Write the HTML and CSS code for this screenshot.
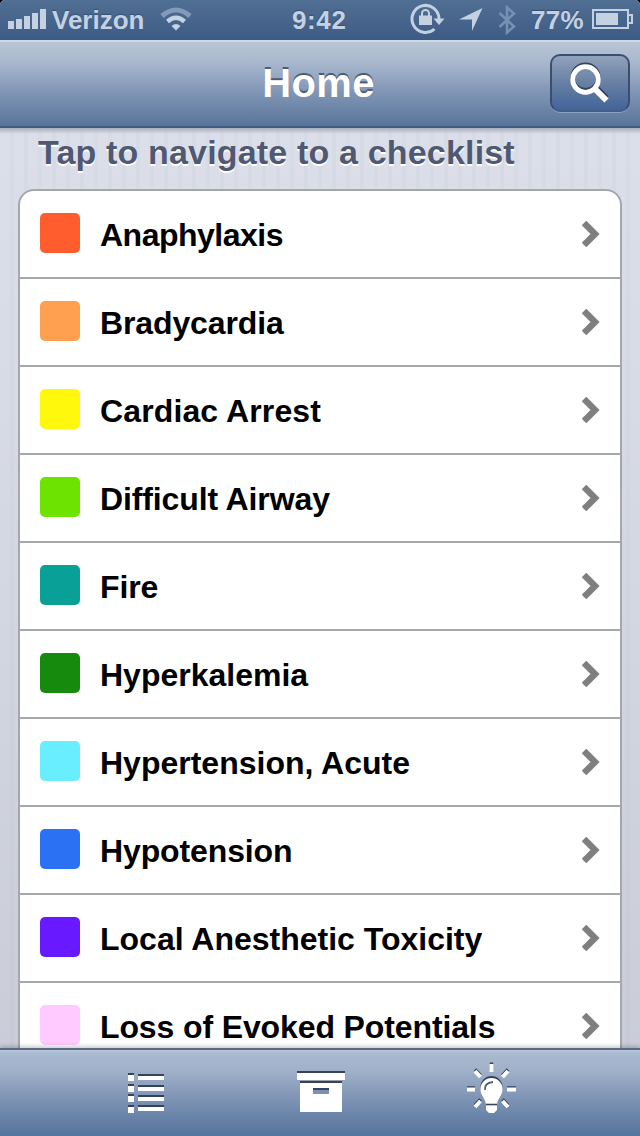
FILE: index.html
```html
<!DOCTYPE html>
<html lang="en">
<head>
<meta charset="utf-8">
<title>Home</title>
<link rel="stylesheet" href="styles.css">
</head>
<body>
<div class="screen">
  <header class="status">
    <svg class="signal" width="39" height="20" viewBox="0 0 39 20"><path d="M0 12h6v8H0zM8 10h6v10H8zM16 7h6v13h-6zM24 4h6v16h-6zM32 0h6v20h-6z" fill="#c3d1e3"/></svg>
    <span class="carrier">Verizon</span>
    <svg class="wifi" width="32" height="24" viewBox="0 0 32 24" fill="none"><path d="M2 9Q16-3 30 9" stroke="#819bb9" stroke-width="5"/><path d="M7.500 14.500Q16 7 24.500 14.500" stroke="#c3d5e5" stroke-width="4.500"/><path d="M11.500 19Q16 15 20.500 19L16 23.500z" fill="#c3d5e5"/></svg>
    <span class="clock">9:42</span>
    <svg class="lock" width="35" height="32" viewBox="0 0 35 32" fill="none" stroke="#c3d1e3"><path d="M24.500 26A13.500 13.500 0 1 1 29 15.500V17" stroke-width="3"/><path d="M23.500 15.500h11L29 22z" fill="#c3d1e3" stroke="none"/><path d="M9 12.500h13v9.500H9z" fill="#c3d1e3" stroke="none"/><path d="M12 13V10.500a3.500 3.500 0 0 1 7 0V13" stroke-width="2"/></svg>
    <svg class="arrow" width="24" height="24" viewBox="0 0 24 24"><path d="M23.500 0L13 23V11.500H0z" fill="#c3d1e3"/></svg>
    <svg class="bluetooth" width="18" height="30" viewBox="0 0 18 30"><path d="M1.500 8L16 21.500 9 27.500V2.500l7 6L1.500 22" fill="none" stroke="#7591b3" stroke-width="2.600"/></svg>
    <span class="percent">77%</span>
    <svg class="battery" width="42" height="20" viewBox="0 0 42 20"><path d="M1 1h35v5h4v8h-4v5H1z" fill="none" stroke="#c3d1e3" stroke-width="2"/><path d="M36 6v8" stroke="#c3d1e3" stroke-width="2"/><path d="M4 4h22v12H4z" fill="#c3d1e3"/></svg>
  </header>
  <nav class="navbar">
    <h1>Home</h1>
    <button class="search" aria-label="Search"><svg width="40" height="42" viewBox="0 0 40 42" fill="none"><g stroke="#35435d"><circle cx="15.500" cy="15.500" r="12.800" stroke-width="4.500"/><path d="M25.500 25L36.500 36" stroke-width="6"/></g><g stroke="#fff"><circle cx="15.500" cy="17.500" r="12.800" stroke-width="4.800"/><path d="M25 27L36.500 38.500" stroke-width="6"/></g></svg></button>
  </nav>
  <main class="content">
    <h2>Tap to navigate to a checklist</h2>
    <ul class="list">
      <li><i class="swatch anaphylaxis"></i><span class="tighter">Anaphylaxis</span><svg class="chevron" viewBox="0 0 18 26"><path d="M2 2L13 13 2 24"/></svg></li>
      <li><i class="swatch bradycardia"></i><span class="tight">Bradycardia</span><svg class="chevron" viewBox="0 0 18 26"><path d="M2 2L13 13 2 24"/></svg></li>
      <li><i class="swatch cardiac"></i><span class="loose">Cardiac Arrest</span><svg class="chevron" viewBox="0 0 18 26"><path d="M2 2L13 13 2 24"/></svg></li>
      <li><i class="swatch airway"></i><span class="tight">Difficult Airway</span><svg class="chevron" viewBox="0 0 18 26"><path d="M2 2L13 13 2 24"/></svg></li>
      <li><i class="swatch fire"></i><span class="tight">Fire</span><svg class="chevron" viewBox="0 0 18 26"><path d="M2 2L13 13 2 24"/></svg></li>
      <li><i class="swatch hyperkalemia"></i><span>Hyperkalemia</span><svg class="chevron" viewBox="0 0 18 26"><path d="M2 2L13 13 2 24"/></svg></li>
      <li><i class="swatch hypertension"></i><span>Hypertension, Acute</span><svg class="chevron" viewBox="0 0 18 26"><path d="M2 2L13 13 2 24"/></svg></li>
      <li><i class="swatch hypotension"></i><span class="tight">Hypotension</span><svg class="chevron" viewBox="0 0 18 26"><path d="M2 2L13 13 2 24"/></svg></li>
      <li><i class="swatch anesthetic"></i><span>Local Anesthetic Toxicity</span><svg class="chevron" viewBox="0 0 18 26"><path d="M2 2L13 13 2 24"/></svg></li>
      <li><i class="swatch potentials"></i><span class="tight">Loss of Evoked Potentials</span><svg class="chevron" viewBox="0 0 18 26"><path d="M2 2L13 13 2 24"/></svg></li>
    </ul>
  </main>
  <footer class="toolbar">
    <svg width="100" height="86" viewBox="0 0 100 86"><path d="M28 23h6v3h-6zM38 24h26v2H38zM28 34h6v3h-6zM38 35h26v2H38zM28 44h6v3h-6zM38 45h26v2H38zM28 55h6v2h-6zM38 55h26v2H38z" fill="#35435d"/><path d="M28 25h6v6h-6zM38 26h26v4H38zM28 36h6v6h-6zM38 37h26v4H38zM28 46h6v6h-6zM38 47h26v4H38zM28 57h6v6h-6zM38 57h26v4H38z" fill="#fff"/></svg>
    <svg width="100" height="86" viewBox="0 0 100 86"><path d="M27 21h48v10H27zM30 30h42v5H30z" fill="#35435d"/><path d="M27 23h48v7.500H27zM30 33h42v29H30z" fill="#fff"/><path d="M43 38h16v6H43z" fill="#7d92b2"/><path d="M43 38h16v2H43z" fill="#35435d"/></svg>
    <svg width="100" height="86" viewBox="0 0 100 86"><g fill="#35435d" stroke="#35435d" transform="translate(0 -1.500)"><path d="M51.500 14v8M35 21l5.500 6M68 21l-5.500 6M27 39.500h8M67 39.500h9M35 57l5.500-6M68 57l-5.500-6" stroke-width="3.500"/><circle cx="51.500" cy="38.500" r="11" stroke="none"/></g><path d="M51.500 14v8M35 21l5.500 6M68 21l-5.500 6M27 39.500h8M67 39.500h9M35 57l5.500-6M68 57l-5.500-6" stroke="#fff" stroke-width="4"/><path d="M40.500 39a11 11 0 0 1 22 0c0 7-5 9-5.500 16H46c-.5-7-5.500-9-5.500-16z" fill="#fff"/><path d="M46 55h11v5l-3 3h-5l-3-3z" fill="#fff"/><path d="M46 54.500h11" stroke="#35435d" stroke-width="1.600"/><path d="M45 40q-1-7 8-8" fill="none" stroke="#4c5b74" stroke-width="1.800"/></svg>
  </footer>
</div>
</body>
</html>
```
FILE: styles.css
```css
* { box-sizing: border-box; }
body { margin: 0; background: #000; font-family: "Liberation Sans", Arial, sans-serif; }
.screen { width: 640px; height: 1136px; display: flex; flex-direction: column; overflow: hidden; border-radius: 5px 5px 0 0; background: #d8dbe6; }

.status { flex: none; height: 40px; display: flex; align-items: flex-start; color: #c3d1e3; font-size: 26px; line-height: 30px; font-weight: bold; background: linear-gradient(#516e93, #3e5b85); text-shadow: 0 -1px 1px #345071; }
.status svg { flex: none; }
.signal { margin: 9px 0 0 8px; }
.carrier { width: 103px; margin: 5px 0 0 5px; }
.wifi { margin: 7px 0 0 5px; }
.clock { width: 60px; margin: 5px 0 0 100px; letter-spacing: .6px; }
.lock { margin: 3px 0 0 58px; }
.arrow { margin: 8px 0 0 14px; }
.bluetooth { margin: 5px 0 0 15px; }
.percent { width: 57px; margin: 5px 0 0 15px; letter-spacing: .3px; }
.battery { margin: 9px 0 0 4px; }

.navbar { flex: none; height: 88px; display: grid; grid-template-columns: 110px 1fr 110px; align-items: start; border-top: 2px solid #cadaec; border-bottom: 2px solid #3e5b85; background: linear-gradient(#b9c5d5, #a8b7ce 25%, #8095b5 60%, #577599); }
.navbar h1 { grid-column: 2; margin: 17px 0 0; padding-right: 3px; color: #fff; text-align: center; font-size: 40px; line-height: 48px; letter-spacing: .4px; text-shadow: 0 -2px 0 #4c5b74; }
.search { width: 80px; height: 58px; margin: 12px 0 0 20px; padding: 0 0 0 18px; display: block; border: 2px solid #3c4e6d; border-bottom-color: #435e87; border-radius: 10px; background: linear-gradient(#91a2bc, #6880a3 50%, #42649a); box-shadow: 0 1px 0 #8ba2c0; }
.search svg { display: block; overflow: visible; }

.content { flex: 1; min-height: 0; padding: 0 18px; overflow: hidden; background: linear-gradient(#a9aebc, transparent 6px), repeating-linear-gradient(90deg, #ffffff0c 0 10px, #9fb3cc0c 10px 14px), linear-gradient(#dadde7, #d6d9e4 30%, #c8cad7); }
.content h2 { height: 61px; margin: 0; padding: 5px 0 0 20px; color: #505972; font-size: 34px; line-height: 38px; letter-spacing: .17px; text-shadow: 0 2px 0 #fff; white-space: nowrap; }
.list { width: 604px; margin: 0; padding: 0; list-style: none; border: 2px solid #a5a7ab; border-radius: 16px; background: #fff; }
.list li { height: 88px; display: flex; align-items: center; padding: 0 20px 2px; border-bottom: 2px solid #a5a7aa; font-size: 32px; line-height: 40px; font-weight: bold; color: #000; }
.list span { flex: 1; margin: 3px 0 0 20px; white-space: nowrap; }
.list .tight { letter-spacing: -.12px; }
.list .tighter { letter-spacing: -.5px; }
.list .loose { letter-spacing: .12px; }
.swatch { width: 40px; height: 40px; border-radius: 5px; }
.anaphylaxis { background: #ff5d2e; }
.bradycardia { background: #ff9f50; }
.cardiac { background: #fff80c; }
.airway { background: #6ce300; }
.fire { background: #08a097; }
.hyperkalemia { background: #168a0c; }
.hypertension { background: #68eeff; }
.hypotension { background: #2b71f3; }
.anesthetic { background: #6819ff; }
.potentials { background: #ffcaff; }
.chevron { width: 18px; height: 26px; margin-top: 2px; }
.chevron path { fill: none; stroke: #7f7f7f; stroke-width: 6.5; }

.toolbar { flex: none; height: 88px; display: flex; gap: 70px; padding-left: 100px; border-top: 2px solid #5b6882; background: linear-gradient(#bbc7df, #a9bbd0 3px, #9fb0c8 25%, #7b91b3 60%, #54749d); box-shadow: 0 -2px 4px #0003; }
.toolbar svg { flex: none; }
```
